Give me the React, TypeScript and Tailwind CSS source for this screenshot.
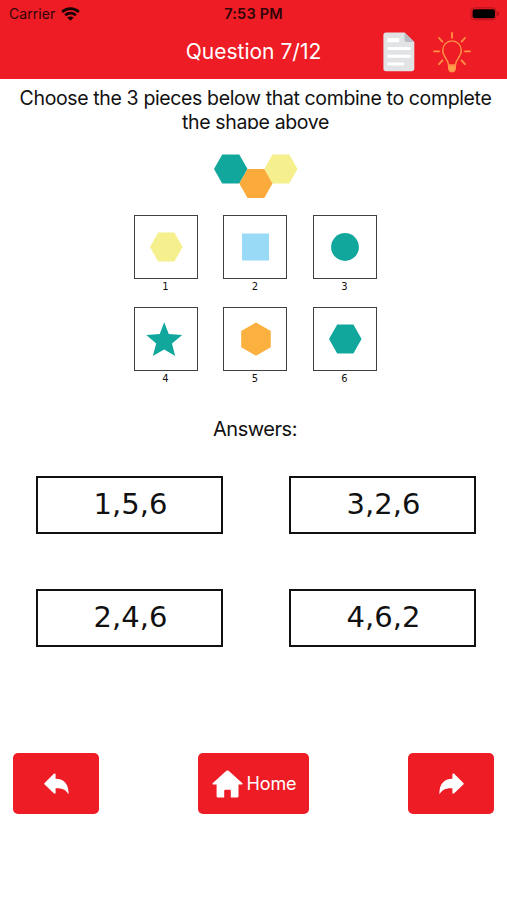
import React from 'react'

interface Piece {
  label: string
  shape: React.ReactNode
}

const FLAT_HEX = '16,32 24.2,17.5 40.4,17.5 48.6,32 40.4,46.5 24.2,46.5'

const pieces: Piece[] = [
  { label: '1', shape: <polygon points={FLAT_HEX} fill="#f5f08d" /> },
  { label: '2', shape: <rect x="19" y="18.5" width="27" height="27" fill="#99daf7" /> },
  { label: '3', shape: <circle cx="32" cy="32" r="13.9" fill="#12a79d" /> },
  {
    label: '4',
    shape: (
      <polygon
        points="30.2,15.3 34.8,26.9 48.2,28.1 38,36.5 41.2,49 30.2,42.5 18.8,49 22.2,36.5 12.3,28.1 25.7,26.9"
        fill="#12a79d"
      />
    ),
  },
  { label: '5', shape: <polygon points="33,15.4 47.8,23.9 47.8,40.2 33,48.8 18.2,40.2 18.2,23.9" fill="#fbb040" /> },
  { label: '6', shape: <polygon points={FLAT_HEX} fill="#12a79d" /> },
]

const answers = ['1,5,6', '3,2,6', '2,4,6', '4,6,2']

const StatusBar = () => (
  <div className="flex h-[27px] items-center justify-between pr-[7px] pl-[9px] text-[#300507]">
    <div className="flex w-[150px] items-center gap-[6px]">
      <span className="text-[14px] leading-[27px] tracking-[0.05px]">Carrier</span>
      <svg width="19" height="14" viewBox="0 0 19 14" fill="none" stroke="#180203" strokeWidth="2.7">
        <path d="M1.2 5C5.8 .5 13.2.5 17.8 5" />
        <path d="M4.2 8.2C7.2 5.4 11.8 5.4 14.8 8.2" />
        <path d="M9.5 13.7 6.3 10.5C8.1 9 10.9 9 12.7 10.5Z" fill="#180203" stroke="none" />
      </svg>
    </div>
    <span className="pr-[2px] text-[14.5px] leading-[27px] font-semibold tracking-[0.2px]">7:53 PM</span>
    <div className="flex w-[150px] justify-end">
      <svg width="30" height="14" viewBox="0 0 30 14">
        <rect x="1" y=".8" width="25" height="12" rx="3.5" fill="none" stroke="#b9151c" />
        <rect x="2.6" y="2.2" width="22.4" height="9" rx="2" fill="#000" />
        <path d="M27.2 4.5C29.6 5.2 29.6 8.5 27.2 9.2Z" fill="#a3141a" />
      </svg>
    </div>
  </div>
)

const NoteIcon = () => (
  <svg width="32" height="40" viewBox="0 0 32 40">
    <path d="M3 .5H21.5L31.3 10V36.5Q31.3 39.2 28.5 39.2H3Q.4 39.2.4 36.5V3Q.4.5 3 .5Z" fill="#e2e3e5" />
    <path d="M21.5.5 31.3 10H23.5Q21.5 10 21.5 8Z" fill="#b9bcc3" />
    <g fill="#fff">
      <rect x="4.3" y="6" width="12" height="4.2" rx=".8" />
      <rect x="4.3" y="15" width="23.5" height="3" rx="1" />
      <rect x="4.3" y="22.7" width="23.5" height="3" rx="1" />
      <rect x="4.3" y="30.5" width="17" height="3" rx="1" />
    </g>
  </svg>
)

const BulbIcon = () => (
  <svg width="38" height="41" viewBox="0 0 38 41" fill="none" stroke="#ff9447" strokeWidth="1.4" strokeLinecap="round">
    <path d="M15.5 33C15.5 27.5 9.7 25 9.7 18.2A9.3 9.3 0 0 1 28.3 18.2C28.3 25 22.5 27.5 22.5 33Z" />
    <path d="M15.7 34H22.3V37L20.8 39.5H17.2L15.7 37Z" fill="#ffa04d" />
    <path
      strokeWidth="1.8"
      d="M19 1V5.8M6 6 9.4 9.6M32 6 28.6 9.6M1 19.4H6M32 19.4H37M6 32.2 9.5 28.3M32 32.2 28.5 28.3"
    />
  </svg>
)

const BackArrow = () => (
  <svg width="25" height="22" viewBox="0 0 25 22" fill="#fff">
    <path d="M.4 10.3 9.8.8Q11.4-.2 11.6 1.2V5.8C20.5 6 24.8 11.5 24.6 21.2C22 16.8 18 14.8 11.6 15.2V20Q11.4 21.4 9.8 20.3L.4 11.3Q0 10.8.4 10.3Z" />
  </svg>
)

const HomeIcon = () => (
  <svg width="31" height="28" viewBox="0 0 31 28" fill="#fff">
    <path d="M14.4.8Q15.5 0 16.6.8L30.4 13.2Q31 14.5 29.8 14.5H26.5V26.2Q26.5 27.6 25 27.6H18.8V20.8Q18.8 19.8 17.8 19.8H13.2Q12.2 19.8 12.2 20.8V27.6H6Q4.6 27.6 4.6 26.2V14.5H1.2Q0 14.5.6 13.2Z" />
  </svg>
)

export default function App() {
  return (
    <div className="h-[900px] w-[507px] overflow-hidden bg-white font-['Inter','Liberation_Sans',sans-serif] text-[#111]">
      <header className="h-[79px] bg-[#ee1c25]">
        <StatusBar />
        <div className="grid h-[50px] grid-cols-[1fr_auto_1fr] items-center">
          <h1 className="col-start-2 text-[21px] leading-[50px] text-white">Question 7/12</h1>
          <div className="flex items-center justify-end gap-[18px] pr-[36px]">
            <NoteIcon />
            <BulbIcon />
          </div>
        </div>
      </header>

      <main>
        <p className="mt-[8px] h-[42px] overflow-hidden pl-[4px] text-center text-[19.5px] leading-[23.5px] tracking-[-0.37px]">
          Choose the 3 pieces below that combine to complete
          <br />
          the shape above
        </p>

        {/* Target shape */}
        <div className="mt-[25px] flex h-[45px] justify-center pl-[4px]">
          <svg width="84" height="45" viewBox="0 0 84 45">
            <polygon points="0,15 8.2,.5 25.3,.5 33.5,15 25.3,29.5 8.2,29.5" fill="#12a79d" />
            <polygon points="50.3,15 58.5,.5 75.3,.5 83.5,15 75.3,29.5 58.5,29.5" fill="#f5f08d" />
            <polygon points="25.3,29.5 33.5,15 50.3,15 58.5,29.5 50.3,44 33.5,44" fill="#fbab3c" />
          </svg>
        </div>

        {/* Numbered pieces */}
        <div className="mt-[16px] grid grid-cols-[64px_64px_64px] gap-x-[25.5px] pl-[133.5px]">
          {pieces.map((piece) => (
            <figure key={piece.label} className="h-[92.3px]">
              <svg className="block" width="64" height="64" viewBox="0 0 64 64">
                <rect x=".5" y=".5" width="63" height="63" fill="#fff" stroke="#404040" />
                {piece.shape}
              </svg>
              <figcaption className="text-center font-['DejaVu_Sans',sans-serif] text-[10px] leading-[16px]">
                {piece.label}
              </figcaption>
            </figure>
          ))}
        </div>

        <h2 className="mt-[16px] pl-[3px] text-center text-[20px] leading-[26px] tracking-[-0.45px]">Answers:</h2>

        <div className="mt-[34px] grid grid-cols-[187px_187px] gap-x-[66px] gap-y-[55px] pl-[36px]">
          {answers.map((answer) => (
            <button
              key={answer}
              className="h-[58px] border-[2.5px] border-[#111] bg-white pl-[2px] font-['DejaVu_Sans',sans-serif] text-[29px] leading-[53px]"
            >
              {answer}
            </button>
          ))}
        </div>
      </main>

      <nav className="mt-[106.5px] flex justify-between pr-[13px] pl-[13px] text-white">
        <button className="flex h-[61px] w-[86px] items-center justify-center rounded-[5px] bg-[#ee1c25]">
          <BackArrow />
        </button>
        <button className="flex h-[61px] w-[111px] items-center justify-center gap-[3px] rounded-[5px] bg-[#ee1c25] pl-[2px] text-[18px] tracking-[-0.1px]">
          <HomeIcon />
          Home
        </button>
        <button className="flex h-[61px] w-[86px] items-center justify-center rounded-[5px] bg-[#ee1c25]">
          <span className="-scale-x-100">
            <BackArrow />
          </span>
        </button>
      </nav>
    </div>
  )
}
